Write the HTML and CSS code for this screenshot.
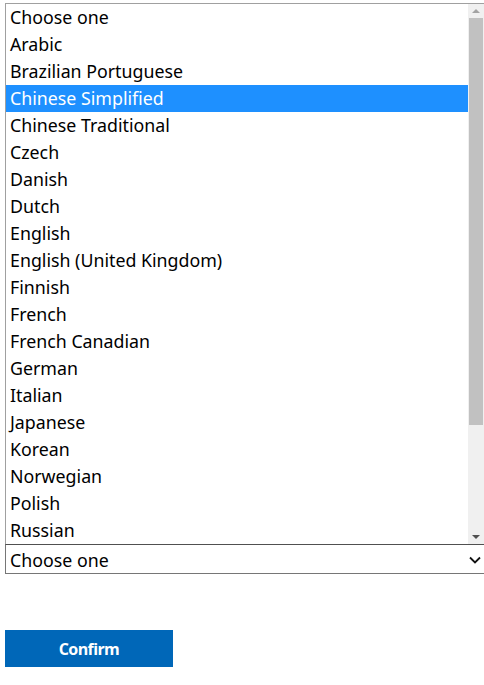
FILE: index.html
```html
<!DOCTYPE html>
<html>
<head>
<meta charset="utf-8">
<link rel="stylesheet" href="styles.css">
</head>
<body>
<div class="page">
  <div class="listbox">
    <div class="options">
      <div class="opt">Choose one</div>
      <div class="opt">Arabic</div>
      <div class="opt">Brazilian Portuguese</div>
      <div class="opt sel">Chinese Simplified</div>
      <div class="opt">Chinese Traditional</div>
      <div class="opt">Czech</div>
      <div class="opt">Danish</div>
      <div class="opt">Dutch</div>
      <div class="opt">English</div>
      <div class="opt">English (United Kingdom)</div>
      <div class="opt">Finnish</div>
      <div class="opt">French</div>
      <div class="opt">French Canadian</div>
      <div class="opt">German</div>
      <div class="opt">Italian</div>
      <div class="opt">Japanese</div>
      <div class="opt">Korean</div>
      <div class="opt">Norwegian</div>
      <div class="opt">Polish</div>
      <div class="opt">Russian</div>
    </div>
    <div class="scrollbar">
      <div class="arrow up"></div>
      <div class="track"><div class="thumb"></div></div>
      <div class="arrow down"></div>
    </div>
  </div>
  <div class="select">
    <span class="sel-text">Choose one</span>
    <svg class="chev" width="12" height="8" viewBox="0 0 12 8"><path d="M1 1.5 L6 6.5 L11 1.5" fill="none" stroke="#111" stroke-width="1.8"/></svg>
  </div>
  <button class="confirm">Confirm</button>
</div>
</body>
</html>
```
FILE: styles.css
```css
html, body {
  margin: 0;
  padding: 0;
  background: #fff;
  overflow: hidden;
}
.page {
  padding: 3px 0 0 5px;
  font-family: "Noto Sans", "Open Sans", sans-serif;
  color: #000;
}
.listbox {
  display: flex;
  border: 1px solid #a0a0a0;
  border-right: none;
  border-bottom: none;
  height: 540px;
  overflow: hidden;
}
.options {
  flex: 1;
}
.opt {
  height: 27px;
  line-height: 27px;
  font-size: 17.8px;
  padding-left: 4px;
  white-space: nowrap;
}
.opt.sel {
  background: #1e90ff;
  color: #fff;
}
.scrollbar {
  width: 16px;
  background: #f0f0f0;
  display: flex;
  flex-direction: column;
}
.arrow {
  height: 14px;
  display: flex;
  align-items: center;
  justify-content: center;
}
.arrow::after {
  content: "";
  border-left: 4px solid transparent;
  border-right: 4px solid transparent;
}
.arrow.up::after {
  border-bottom: 4px solid #a3a3a3;
}
.arrow.down::after {
  border-top: 4px solid #505050;
}
.track {
  flex: 1;
  padding: 0 1px;
}
.thumb {
  height: 407px;
  background: #c1c1c1;
}
.select {
  display: flex;
  align-items: center;
  justify-content: space-between;
  height: 27px;
  border: 1px solid #767676;
  border-top-color: #505050;
  border-right: none;
  padding: 1px 0 0 4px;
  font-size: 17.8px;
}
.chev {
  margin-right: 3px;
}
.confirm {
  display: block;
  margin-top: 56px;
  width: 168px;
  height: 37px;
  border: none;
  background: #0067b8;
  color: #fff;
  font-family: "Open Sans", "Noto Sans", sans-serif;
  font-weight: 700;
  font-size: 16px;
  letter-spacing: -0.6px;
  padding: 0;
}
```
